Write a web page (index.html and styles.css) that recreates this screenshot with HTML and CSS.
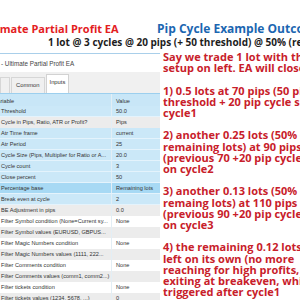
FILE: index.html
```html
<!DOCTYPE html>
<html lang="en">
<head>
	<meta charset="UTF-8">
	<title>Ultimate Partial Profit EA - Pip Cycle Example</title>
	<link rel="stylesheet" href="styles.css">
</head>
<body>
	<div class="page">
		<header class="head">
			<div class="titles">
				<h1 class="t-red">Ultimate Partial Profit EA</h1>
				<h2 class="t-blue">Pip Cycle Example Outcome</h2>
			</div>
			<p class="sub">1 lot @ 3 cycles @ 20 pips (+ 50 threshold) @ 50% (remaining lots)</p>
		</header>

		<section class="content">
			<div class="win">
				<div class="win-title">- Ultimate Partial Profit EA</div>
				<ul class="tabs">
					<li class="tab cut">About</li>
					<li class="tab">Common</li>
					<li class="tab on">Inputs</li>
				</ul>
				<div class="grid">
					<div class="row head-row"><span class="name">Variable</span><span class="val">Value</span></div>
					<div class="row sel"><span class="name">Threshold</span><span class="val">50.0</span></div>
					<div class="row alt"><span class="name">Cycle in Pips, Ratio, ATR or Profit?</span><span class="val">Pips</span></div>
					<div class="row sel"><span class="name">Atr Time frame</span><span class="val">current</span></div>
					<div class="row sel"><span class="name">Atr Period</span><span class="val">25</span></div>
					<div class="row sel"><span class="name">Cycle Size (Pips, Multiplier for Ratio or A...</span><span class="val">20.0</span></div>
					<div class="row sel"><span class="name">Cycle count</span><span class="val">3</span></div>
					<div class="row sel"><span class="name">Close percent</span><span class="val">50</span></div>
					<div class="row hl"><span class="name">Percentage base</span><span class="val">Remaining lots</span></div>
					<div class="row sel"><span class="name">Break even at cycle</span><span class="val">2</span></div>
					<div class="row alt"><span class="name">BE Adjustment in pips</span><span class="val">0.0</span></div>
					<div class="row"><span class="name">Filter Symbol condition (None=Current sy...</span><span class="val">None</span></div>
					<div class="row alt"><span class="name">Filter Symbol values (EURUSD, GBPUS...</span><span class="val"></span></div>
					<div class="row"><span class="name">Filter Magic Numbers condition</span><span class="val">None</span></div>
					<div class="row alt"><span class="name">Filter Magic Numbers values (1111, 222...</span><span class="val"></span></div>
					<div class="row"><span class="name">Filter Comments condition</span><span class="val">None</span></div>
					<div class="row alt"><span class="name">Filter Comments values (comm1, comm2...)</span><span class="val"></span></div>
					<div class="row"><span class="name">Filter tickets condition</span><span class="val">None</span></div>
					<div class="row alt"><span class="name">Filter tickets values (1234, 5678, ...)</span><span class="val">0</span></div>
				</div>
			</div>

			<div class="note">
				<p>Say we trade 1 lot with the<br>setup on left. EA will close:</p>
				<p>1) 0.5 lots at 70 pips (50 pip<br>threshold + 20 pip cycle size) on<br>cycle1</p>
				<p>2) another 0.25 lots (50% of<br>remaining lots) at 90 pips<br>(previous 70 +20 pip cycle)<br>on cycle2</p>
				<p>3) another 0.13 lots (50% of<br>remaing lots) at 110 pips<br>(previous 90 +20 pip cycle)<br>on cycle3</p>
				<p>4) the remaining 0.12 lots is<br>left on its own (no more<br>reaching for high profits,<br>exiting at breakeven, which is<br>triggered after cycle1</p>
			</div>
		</section>
	</div>
</body>
</html>
```

FILE: styles.css
```css
* {
	margin:0;
	padding:0;
	box-sizing:border-box;
}
html,body {
	width:300px;
	height:300px;
	overflow:hidden;
	background:#fff;
}
ul {
	list-style:none;
}
.page {
	width:300px;
	overflow:hidden;
	font-family:"Open Sans", "Liberation Sans", sans-serif;
}

/* header */
.head {
	padding-top:22px;
	white-space:nowrap;
	overflow:hidden;
}
.titles {
	display:flex;
	align-items:center;
	height:14px;
}
.t-red,
.t-blue {
	font-weight:700;
	line-height:14px;
	flex:none;
}
.t-red {
	width:177px;
	margin-left:-20px;
	font-size:11px;
	color:#e3201e;
}
.t-blue {
	font-size:12px;
	color:#1b66b1;
}
.sub {
	padding-left:48px;
	font-size:10px;
	line-height:13px;
	font-weight:700;
	color:#1d1d1d;
}

/* body */
.content {
	display:flex;
	padding-top:2px;
}

/* settings window */
.win {
	flex:none;
	width:160px;
	margin-top:2px;
	border-top:1px solid #a9cfea;
	font-family:"Liberation Sans", Arial, sans-serif;
	color:#333;
	white-space:nowrap;
	overflow:hidden;
}
.win-title {
	height:18px;
	padding:4px 0 0 1px;
	font-size:6.3px;
	line-height:12px;
	color:#444;
}
.tabs {
	display:flex;
	align-items:flex-end;
	height:21px;
	background:#f0f0f0;
	font-size:5.8px;
}
.tab {
	height:16px;
	line-height:15px;
	padding:0 4px;
	border:1px solid #d6d6d6;
	border-bottom:0;
	background:#f0f0f0;
}
.tab.cut {
	width:4px;
	overflow:hidden;
	color:transparent;
}
.tab.on {
	height:19px;
	padding:0 3px;
	background:#fff;
	border-color:#d2d2d2;
}
.tab + .tab {
	margin-left:1px;
}

.grid {
	display:flex;
	flex-direction:column;
	font-size:5.6px;
}
.row {
	display:grid;
	grid-template-columns:112px 48px;
	height:11px;
	line-height:11px;
	background:#fff;
}
.row.alt {
	background:#ececec;
}
.row.sel {
	background:#cbe8f8;
	border-bottom:1px solid #e4f3fc;
	line-height:10px;
}
.row.hl {
	background:#a7d9f4;
	border-bottom:1px solid #e4f3fc;
	line-height:10px;
}
.row.head-row {
	height:13px;
	line-height:14px;
	background:#c8e6f7;
	border-top:1px solid #9ccfee;
}
.name {
	padding-left:1px;
	overflow:hidden;
	border-right:1px solid #e3eef5;
}
.head-row .name {
	text-indent:-7px;
}
.val {
	padding-left:4px;
	overflow:hidden;
}

/* note */
.note {
	flex:1;
	min-width:0;
	padding-left:3px;
	font-size:11px;
	line-height:11.2px;
	font-weight:700;
	color:#c8202a;
	white-space:nowrap;
	overflow:hidden;
}
.note p {
	margin-bottom:11.2px;
}
```
